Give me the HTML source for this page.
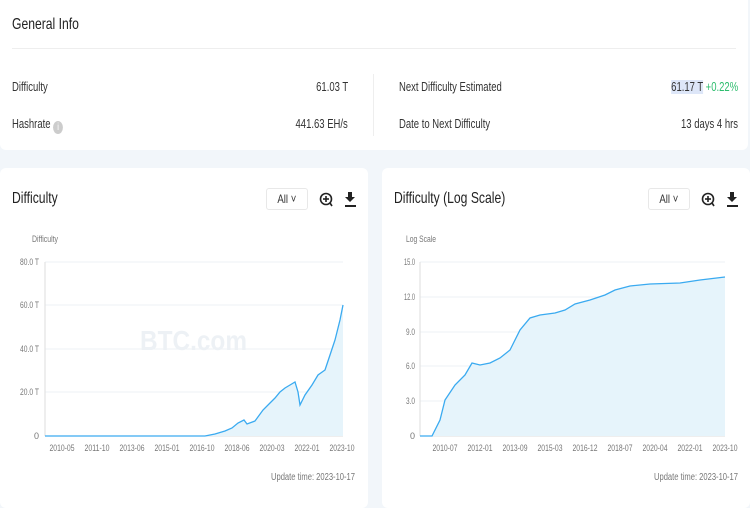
<!DOCTYPE html>
<html><head><meta charset="utf-8"><style>
*{margin:0;padding:0;box-sizing:border-box}
body{width:750px;height:500px;background:#f2f6fa;font-family:"Liberation Sans",sans-serif;color:#333;position:relative;overflow:hidden}
.card{position:absolute;background:#fff;border-radius:6px}
.t{position:absolute;font-size:12.5px;white-space:nowrap;transform:scaleX(.76);transform-origin:left}
.r{transform-origin:right}
.h{position:absolute;font-size:16px;color:#222;white-space:nowrap;transform:scaleX(.76);transform-origin:left}
.sel{position:absolute;width:42px;height:22px;border:1px solid #e8e8e8;border-radius:3px;font-size:12px;text-align:center;line-height:20px}
.sel span{display:inline-block;transform:scaleX(.8)}
</style></head><body>
<div class="card" style="left:0;top:0;width:748px;height:150px;border-radius:0 0 6px 6px">
<div class="h" style="left:12px;top:16px">General Info</div>
<div style="position:absolute;left:12px;right:12px;top:48px;height:1px;background:#eee"></div>
<div style="position:absolute;left:373px;top:74px;width:1px;height:62px;background:#eee"></div>
<div class="t" style="left:12px;top:80px">Difficulty</div>
<div class="t r" style="right:400px;top:80px">61.03 T</div>
<div class="t" style="left:12px;top:117px">Hashrate <span style="display:inline-block;width:13px;height:13px;border-radius:50%;background:#ccc;color:#fff;font-size:10px;text-align:center;line-height:13px;vertical-align:-2px">i</span></div>
<div class="t r" style="right:400px;top:117px">441.63 EH/s</div>
<div class="t" style="left:399px;top:80px">Next Difficulty Estimated</div>
<div class="t r" style="right:10px;top:80px"><span style="background:#dde6f8">61.17 T</span> <span style="color:#2ebd6e">+0.22%</span></div>
<div class="t" style="left:399px;top:117px">Date to Next Difficulty</div>
<div class="t r" style="right:10px;top:117px">13 days 4 hrs</div>
</div>

<div class="card" style="left:0;top:168px;width:368px;height:340px"></div>
<div class="card" style="left:382px;top:168px;width:368px;height:340px"></div>

<div class="h" style="left:12px;top:190px">Difficulty</div>
<div class="sel" style="left:266px;top:188px"><span>All ˅</span></div>
<div class="h" style="left:394px;top:190px">Difficulty (Log Scale)</div>
<div class="sel" style="left:648px;top:188px"><span>All ˅</span></div>

<svg style="position:absolute;left:0;top:0" width="750" height="500">
<g fill="none" stroke="#222" stroke-width="1.6">
<circle cx="326" cy="199" r="5.5"/><line x1="330" y1="203" x2="332" y2="206"/><line x1="323" y1="199" x2="329" y2="199"/><line x1="326" y1="196" x2="326" y2="202"/>
<circle cx="708" cy="199" r="5.5"/><line x1="712" y1="203" x2="714" y2="206"/><line x1="705" y1="199" x2="711" y2="199"/><line x1="708" y1="196" x2="708" y2="202"/>
</g>
<g fill="#222"><path d="M348 192h4v5h3l-5 5-5-5h3z"/><rect x="345" y="205" width="11" height="2"/>
<path d="M730 192h4v5h3l-5 5-5-5h3z"/><rect x="727" y="205" width="11" height="2"/></g>
<g font-family="Liberation Sans,sans-serif" font-size="9" fill="#777" lengthAdjust="spacingAndGlyphs">
<text x="32" y="242" textLength="26" lengthAdjust="spacingAndGlyphs">Difficulty</text>
<text x="406" y="242" textLength="30" lengthAdjust="spacingAndGlyphs">Log Scale</text>
<g text-anchor="end"><text x="39" y="265" textLength="19" lengthAdjust="spacingAndGlyphs">80.0 T</text><text x="39" y="308" textLength="19" lengthAdjust="spacingAndGlyphs">60.0 T</text><text x="39" y="352" textLength="19" lengthAdjust="spacingAndGlyphs">40.0 T</text><text x="39" y="395" textLength="19" lengthAdjust="spacingAndGlyphs">20.0 T</text><text x="39" y="439">0</text>
<text x="415" y="265" textLength="11" lengthAdjust="spacingAndGlyphs">15.0</text><text x="415" y="300" textLength="11" lengthAdjust="spacingAndGlyphs">12.0</text><text x="415" y="335" textLength="9" lengthAdjust="spacingAndGlyphs">9.0</text><text x="415" y="369" textLength="9" lengthAdjust="spacingAndGlyphs">6.0</text><text x="415" y="404" textLength="9" lengthAdjust="spacingAndGlyphs">3.0</text><text x="415" y="439">0</text></g>
<g text-anchor="middle">
<text x="62" y="451" textLength="25" lengthAdjust="spacingAndGlyphs">2010-05</text><text x="97" y="451" textLength="25" lengthAdjust="spacingAndGlyphs">2011-10</text><text x="132" y="451" textLength="25" lengthAdjust="spacingAndGlyphs">2013-06</text><text x="167" y="451" textLength="25" lengthAdjust="spacingAndGlyphs">2015-01</text><text x="202" y="451" textLength="25" lengthAdjust="spacingAndGlyphs">2016-10</text><text x="237" y="451" textLength="25" lengthAdjust="spacingAndGlyphs">2018-06</text><text x="272" y="451" textLength="25" lengthAdjust="spacingAndGlyphs">2020-03</text><text x="307" y="451" textLength="25" lengthAdjust="spacingAndGlyphs">2022-01</text><text x="342" y="451" textLength="25" lengthAdjust="spacingAndGlyphs">2023-10</text>
<text x="445" y="451" textLength="25" lengthAdjust="spacingAndGlyphs">2010-07</text><text x="480" y="451" textLength="25" lengthAdjust="spacingAndGlyphs">2012-01</text><text x="515" y="451" textLength="25" lengthAdjust="spacingAndGlyphs">2013-09</text><text x="550" y="451" textLength="25" lengthAdjust="spacingAndGlyphs">2015-03</text><text x="585" y="451" textLength="25" lengthAdjust="spacingAndGlyphs">2016-12</text><text x="620" y="451" textLength="25" lengthAdjust="spacingAndGlyphs">2018-07</text><text x="655" y="451" textLength="25" lengthAdjust="spacingAndGlyphs">2020-04</text><text x="690" y="451" textLength="25" lengthAdjust="spacingAndGlyphs">2022-01</text><text x="725" y="451" textLength="25" lengthAdjust="spacingAndGlyphs">2023-10</text></g>
<text x="355" y="480" text-anchor="end" font-size="10" textLength="84" lengthAdjust="spacingAndGlyphs">Update time: 2023-10-17</text>
<text x="738" y="480" text-anchor="end" font-size="10" textLength="84" lengthAdjust="spacingAndGlyphs">Update time: 2023-10-17</text>
</g>
<g stroke="#eef2f5"><line x1="45" y1="262" x2="343" y2="262"/><line x1="45" y1="305" x2="343" y2="305"/><line x1="45" y1="349" x2="343" y2="349"/><line x1="45" y1="392" x2="343" y2="392"/>
<line x1="420" y1="262" x2="725" y2="262"/><line x1="420" y1="297" x2="725" y2="297"/><line x1="420" y1="332" x2="725" y2="332"/><line x1="420" y1="366" x2="725" y2="366"/><line x1="420" y1="401" x2="725" y2="401"/></g>
<g stroke="#ddd"><line x1="45" y1="262" x2="45" y2="436"/><line x1="420" y1="262" x2="420" y2="436"/><line x1="45" y1="436" x2="343" y2="436"/><line x1="420" y1="436" x2="725" y2="436"/></g>
<g font-family="Liberation Sans,sans-serif" font-size="28" font-weight="bold" fill="#edf1f5"><text x="140" y="350" textLength="107" lengthAdjust="spacingAndGlyphs">BTC.com</text><text x="522" y="350" textLength="107" lengthAdjust="spacingAndGlyphs">BTC.com</text></g>
<path d="M45 436L205 436L215 434L225 431L232 428L238 423L244 420L247 424L255 421L263 410L270 403L275 398L280 392L285 388L290 385L295 382L298 392L300 405L305 395L312 385L318 375L325 370L330 355L335 340L340 320L343 305L343 436Z" fill="#e6f4fb"/>
<path d="M45 436L205 436L215 434L225 431L232 428L238 423L244 420L247 424L255 421L263 410L270 403L275 398L280 392L285 388L290 385L295 382L298 392L300 405L305 395L312 385L318 375L325 370L330 355L335 340L340 320L343 305" fill="none" stroke="#3aaaf0" stroke-width="1.3"/>
<path d="M420 436L432 436L440 420L445 400L455 385L465 375L472 363L480 365L490 363L500 358L510 350L520 330L530 318L540 315L555 313L565 310L575 304L590 300L605 295L615 290L630 286L650 284L680 283L700 280L725 277L725 436Z" fill="#e6f4fb"/>
<path d="M420 436L432 436L440 420L445 400L455 385L465 375L472 363L480 365L490 363L500 358L510 350L520 330L530 318L540 315L555 313L565 310L575 304L590 300L605 295L615 290L630 286L650 284L680 283L700 280L725 277" fill="none" stroke="#3aaaf0" stroke-width="1.3"/>
</svg>
</body></html>
